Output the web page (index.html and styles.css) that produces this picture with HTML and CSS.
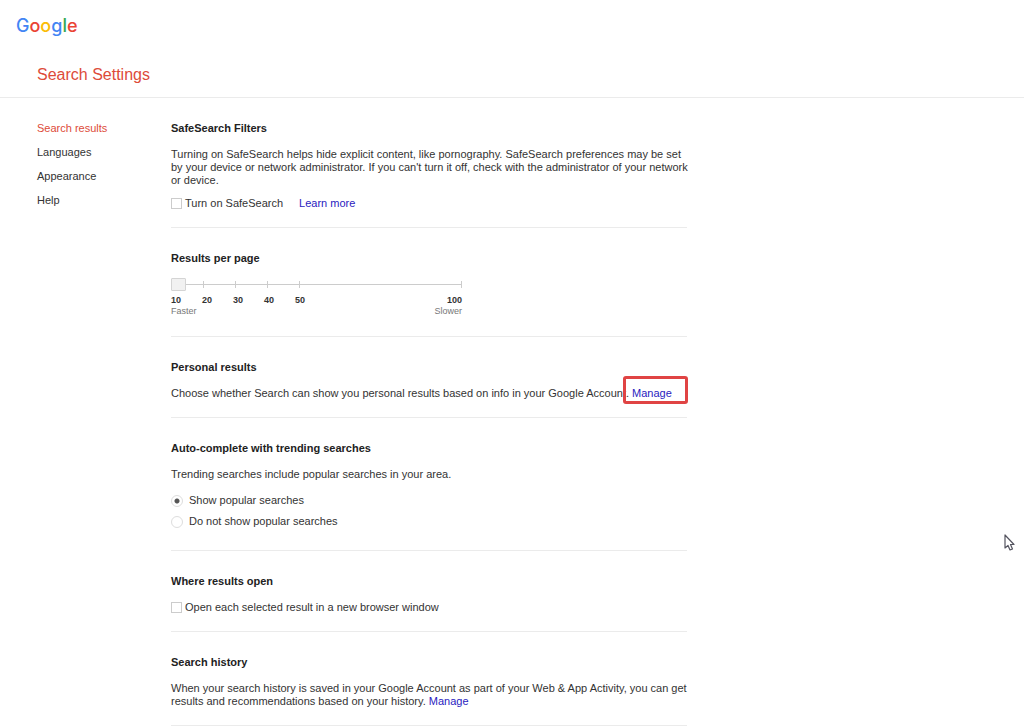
FILE: index.html
```
<!DOCTYPE html>
<html lang="en">
<head>
    <meta charset="UTF-8">
    <meta name="viewport" content="width=device-width, initial-scale=1.0">
    <title>Search Settings</title>
    <link rel="stylesheet" href="styles.css">
</head>
<body>

<header class="header">
    <a class="logo" href="#" aria-label="Google"><span class="blue">G</span><span class="red">o</span><span class="yellow">o</span><span class="blue">g</span><span class="green">l</span><span class="red">e</span></a>
    <h1 class="page-title">Search Settings</h1>
</header>

<div class="page">
    <nav class="side-nav">
        <a class="active" href="#results">Search results</a>
        <a href="#languages">Languages</a>
        <a href="#appearance">Appearance</a>
        <a href="#help">Help</a>
    </nav>

    <main class="settings" id="results">
        <section class="setting">
            <h2>SafeSearch Filters</h2>
            <p>Turning on SafeSearch helps hide explicit content, like pornography. SafeSearch preferences may be set by your device or network administrator. If you can't turn it off, check with the administrator of your network or device.</p>
            <div class="check-row spaced">
                <input type="checkbox" id="safeSearch">
                <label for="safeSearch">Turn on SafeSearch</label>
                <a class="learn-more" href="#">Learn more</a>
            </div>
        </section>

        <section class="setting">
            <h2><label for="perPage">Results per page</label></h2>
            <div class="slider">
                <input type="range" id="perPage" min="10" max="100" step="10" value="10">
                <div class="slider-numbers">
                    <span>10</span>
                    <span>20</span>
                    <span>30</span>
                    <span>40</span>
                    <span>50</span>
                    <span class="last">100</span>
                </div>
                <div class="slider-ends">
                    <span>Faster</span>
                    <span>Slower</span>
                </div>
            </div>
        </section>

        <section class="setting">
            <h2>Personal results</h2>
            <p>Choose whether Search can show you personal results based on info in your Google Account. <a class="marked" href="#">Manage</a></p>
        </section>

        <section class="setting">
            <h2>Auto-complete with trending searches</h2>
            <p>Trending searches include popular searches in your area.</p>
            <div class="radio-list">
                <div class="radio-row">
                    <input type="radio" name="trending" id="trendShow" checked>
                    <label for="trendShow">Show popular searches</label>
                </div>
                <div class="radio-row">
                    <input type="radio" name="trending" id="trendHide">
                    <label for="trendHide">Do not show popular searches</label>
                </div>
            </div>
        </section>

        <section class="setting">
            <h2>Where results open</h2>
            <div class="check-row">
                <input type="checkbox" id="newWindow">
                <label for="newWindow">Open each selected result in a new browser window</label>
            </div>
        </section>

        <section class="setting">
            <h2>Search history</h2>
            <p>When your search history is saved in your Google Account as part of your Web &amp; App Activity, you can get results and recommendations based on your history. <a href="#">Manage</a></p>
        </section>
    </main>
</div>

<!-- Mouse pointer -->
<svg class="pointer" width="12" height="18" viewBox="0 0 12 18" aria-hidden="true">
    <path d="M1 1V14L4 11.500L6 16L8.500 15L6.500 10.500H10Z" fill="#fff" stroke="#555560" stroke-width="1.200" stroke-linejoin="round"/>
</svg>

</body>
</html>
```

FILE: styles.css
```
* {
    box-sizing: border-box;
}

body {
    margin: 0;
    background-color: #fff;
    color: #333;
    font-family: "Liberation Sans", Arial, sans-serif;
    font-size: 11px;
    line-height: 13px;
}

a {
    color: #2a1bc0;
    text-decoration: none;
}

/* Header */
.header {
    display: flex;
    flex-direction: column;
    align-items: flex-start;
    padding: 13px 16px 12px;
    border-bottom: 1px solid #ebebeb;
}

.logo {
    font-family: Inter, sans-serif;
    font-size: 18px;
    font-weight: 500;
    line-height: 26px;
}

.blue {
    color: #4285f4;
}

.red {
    color: #ea4335;
}

.yellow {
    color: #fbbc05;
}

.green {
    color: #34a853;
}

.page-title {
    margin: 26px 0 0 21px;
    color: #dd4b39;
    font-size: 16px;
    font-weight: normal;
    line-height: 20px;
}

/* Layout */
.page {
    display: flex;
    padding-left: 37px;
}

.side-nav {
    display: flex;
    flex-direction: column;
    flex-shrink: 0;
    gap: 11px;
    width: 134px;
    padding-top: 24px;
}

.side-nav a {
    color: #333;
}

.side-nav .active {
    color: #dd4b39;
}

.settings {
    flex: 1;
    max-width: 516px;
}

.setting {
    padding: 24px 0 17px;
    border-bottom: 1px solid #ebebeb;
}

.setting h2 {
    margin: 0 0 13px;
    font-size: 11px;
    color: #222;
}

.setting p {
    margin: 0 -4px 0 0;
}

/* Checkboxes and radios */
.check-row,
.radio-row {
    display: flex;
    align-items: center;
}

.check-row.spaced {
    margin-top: 10px;
}

.check-row input {
    appearance: none;
    width: 11px;
    height: 11px;
    margin: 0 3px 0 0;
    border: 1px solid #ccc;
}

.check-row input:checked {
    background-color: #666;
}

.learn-more {
    margin-left: 16px;
}

.radio-list {
    display: flex;
    flex-direction: column;
    gap: 8px;
    padding: 13px 0 5px;
}

.radio-row input {
    appearance: none;
    width: 12px;
    height: 12px;
    margin: 1px 6px 0 0;
    border: 1px solid #ddd;
    border-radius: 50%;
}

.radio-row input:checked {
    background: radial-gradient(circle, #555 0, #555 2px, #fff 3px);
}

/* Results per page slider */
.slider {
    max-width: 291px;
    padding-bottom: 2px;
    font-size: 9px;
    line-height: 12px;
}

.slider input {
    appearance: none;
    display: block;
    width: 100%;
    height: 13px;
    margin: 0;
    --tick: linear-gradient(#ccc, #ccc);
    background: var(--tick), var(--tick), var(--tick), var(--tick), var(--tick), var(--tick);
    background-repeat: no-repeat;
    background-size: 100% 1px, 1px 7px, 1px 7px, 1px 7px, 1px 7px, 1px 7px;
    background-position: 0 50%, 11% 50%, 22% 50%, 33% 50%, 44% 50%, 100% 50%;
}

.slider input::-webkit-slider-thumb {
    appearance: none;
    width: 15px;
    height: 13px;
    border: 1px solid #d4d4d4;
    border-radius: 1px;
    background-color: #f1f1f1;
}

.slider-numbers {
    display: grid;
    grid-template-columns: repeat(5, 31px) 1fr;
    margin-top: 3px;
    color: #333;
    font-weight: bold;
}

.slider-numbers .last {
    text-align: right;
}

.slider-ends {
    display: flex;
    justify-content: space-between;
    color: #777;
    line-height: 11px;
}

/* Red frame around the link */
.marked {
    position: relative;
}

.marked::after {
    content: "";
    position: absolute;
    top: -11px;
    right: -16px;
    bottom: -5px;
    left: -9px;
    border: 3px solid #e04444;
    border-radius: 3px;
}

.pointer {
    position: absolute;
    top: 534px;
    right: 8px;
}
```
